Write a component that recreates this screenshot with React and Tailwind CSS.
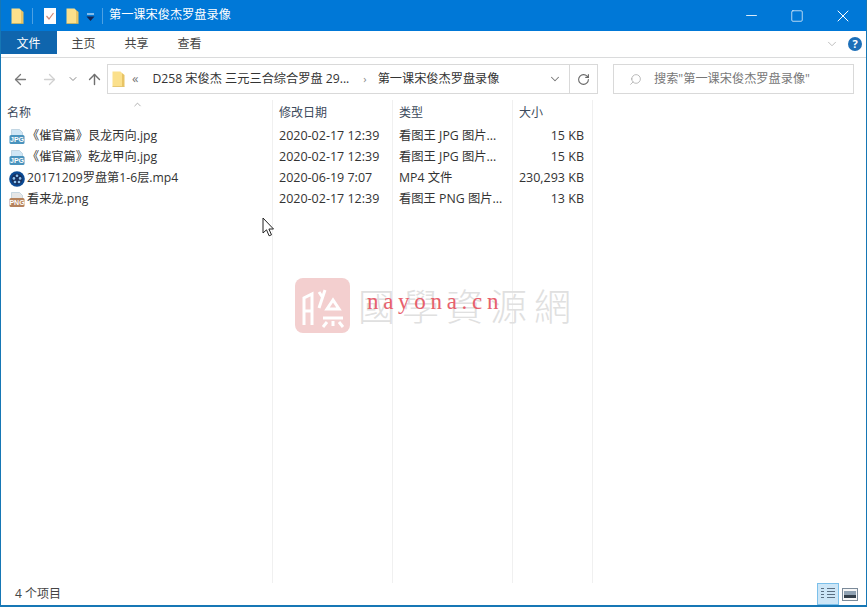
import { ArrowLeft, ArrowRight, ArrowUp, ChevronDown, ChevronUp, RotateCw, Search, Minus, Square, X } from 'lucide-react'

const font = { fontFamily: '"Open Sans", "Noto Sans CJK SC", sans-serif' }

const files = [
  { name: '《催官篇》艮龙丙向.jpg', date: '2020-02-17 12:39', type: '看图王 JPG 图片...', size: '15 KB', icon: 'jpg' },
  { name: '《催官篇》乾龙甲向.jpg', date: '2020-02-17 12:39', type: '看图王 JPG 图片...', size: '15 KB', icon: 'jpg' },
  { name: '20171209罗盘第1-6层.mp4', date: '2020-06-19 7:07', type: 'MP4 文件', size: '230,293 KB', icon: 'mp4' },
  { name: '看来龙.png', date: '2020-02-17 12:39', type: '看图王 PNG 图片...', size: '13 KB', icon: 'png' },
]

function Folder({ className }) {
  return (
    <svg viewBox="0 0 13 16" className={className}>
      <path d="M0.5 0.5h8l1.5 1.5v13.5h-9.5z" fill="#fbe08c" />
      <path d="M10 2l2.5 2v11.5h-2.5z" fill="#e8c465" />
      <path d="M0.5 15h12v0.7h-12z" fill="#dcb64f" />
    </svg>
  )
}

function FileIcon({ kind }) {
  if (kind === 'mp4') {
    return (
      <svg viewBox="0 0 16 16" className="w-4 h-4 shrink-0">
        <circle cx="8" cy="8" r="7.8" fill="#0b4a94" />
        <circle cx="8" cy="8" r="5.6" fill="#17305f" />
        <circle cx="8" cy="4.8" r="1.3" fill="#8fc3ee" />
        <circle cx="4.9" cy="7.4" r="1.3" fill="#8fc3ee" />
        <circle cx="11.1" cy="7.4" r="1.3" fill="#8fc3ee" />
        <circle cx="6" cy="11" r="1.3" fill="#8fc3ee" />
        <circle cx="10" cy="11" r="1.3" fill="#8fc3ee" />
      </svg>
    )
  }
  const band = kind === 'png' ? '#b5825c' : '#4a93bd'
  const page = kind === 'png' ? '#e6e6e6' : '#cfe6f5'
  return (
    <div className="relative w-4 h-4 shrink-0">
      <svg viewBox="0 0 16 16" className="w-4 h-4">
        <path d="M2.5 0.5h8l3 3v5h-11z" fill={page} stroke="#a9c2d4" strokeWidth="0.6" />
        <rect x="0.5" y="6" width="15" height="9" rx="1.5" fill={band} />
      </svg>
      <span className="absolute left-0 top-[6px] w-4 text-center text-[7px] leading-[9px] font-bold text-white" style={{ fontFamily: '"Liberation Sans", sans-serif' }}>
        {kind === 'png' ? 'PNG' : 'JPG'}
      </span>
    </div>
  )
}

function Column({ title, width, className, children }) {
  return (
    <div className={`${width} shrink-0 border-r border-[#f0f0f0] h-full`}>
      <div className={`h-[26px] pb-[1px] flex items-center text-[12px] text-[#3c4a5c] ${className}`}>{title}</div>
      {children}
    </div>
  )
}

function Cell({ className, children }) {
  return <div className={`h-[21px] flex items-center text-[#333] whitespace-nowrap ${className}`}>{children}</div>
}

export default function App() {
  return (
    <div className="w-[867px] h-[607px] flex flex-col bg-white border-x border-b-2 border-x-[#1677b5] border-b-[#1677b5] overflow-hidden text-[12px] relative" style={font}>
      {/* title bar */}
      <div className="h-[31px] -mx-px shrink-0 bg-[#0078d7] flex items-center text-white">
        <Folder className="w-[13px] h-4 ml-[11px]" />
        <div className="w-px h-4 bg-[#4da1e3] ml-2" />
        <svg viewBox="0 0 12 16" className="w-3 h-4 ml-[11px]">
          <path d="M0 0h12v16h-12z" fill="#fdfdfd" />
          <path d="M2.5 8l2.5 3 4.5-6" fill="none" stroke="#d08a78" strokeWidth="1.2" />
        </svg>
        <Folder className="w-[13px] h-4 ml-[10px]" />
        <svg viewBox="0 0 9 9" className="w-[9px] h-[9px] ml-[7px] mt-1">
          <path d="M1 1h7" stroke="#fff" strokeWidth="1" />
          <path d="M0.5 3.5h8l-4 4.5z" fill="#14224f" />
        </svg>
        <div className="w-px h-4 bg-[#4da1e3] ml-[7px]" />
        <span className="ml-[6px] text-[12.2px]">第一课宋俊杰罗盘录像</span>
        <div className="ml-auto flex items-center">
          <Minus className="w-[17px] h-[17px] mr-[30px]" strokeWidth={1.2} absoluteStrokeWidth />
          <Square className="w-[14px] h-[14px] mr-[29px]" strokeWidth={1.2} absoluteStrokeWidth />
          <X className="w-[20px] h-[20px] mr-[14px]" strokeWidth={1.2} absoluteStrokeWidth />
        </div>
      </div>

      {/* ribbon tabs */}
      <div className="h-[27px] shrink-0 -ml-px flex items-start border-b border-[#dadbdc] text-[#444]">
        <div className="w-[57px] h-[23px] pt-[2px] bg-[#0f65ad] text-white flex items-center justify-center">文件</div>
        <div className="w-[53px] h-[23px] pt-[2px] flex items-center justify-center">主页</div>
        <div className="w-[53px] h-[23px] pt-[2px] flex items-center justify-center">共享</div>
        <div className="w-[53px] h-[23px] pt-[2px] flex items-center justify-center">查看</div>
        <div className="ml-auto h-[26px] flex items-center">
          <ChevronDown className="w-[14px] h-[14px] text-[#b5b5b5] mr-[9px]" strokeWidth={1.5} />
          <div className="w-[14px] h-[14px] rounded-full bg-[#1d6fb8] text-white text-[11px] font-bold flex items-center justify-center mr-[4px]">?</div>
        </div>
      </div>

      {/* address row */}
      <div className="h-[42px] shrink-0 flex items-center">
        <ArrowLeft className="w-[17px] h-[17px] text-[#7a7a7a] ml-[11px]" strokeWidth={1.8} />
        <ArrowRight className="w-[17px] h-[17px] text-[#d0d0d0] ml-[12px]" strokeWidth={1.8} />
        <ChevronDown className="w-3 h-3 text-[#8a8a8a] ml-[9px]" strokeWidth={2} />
        <ArrowUp className="w-[17px] h-[17px] text-[#6f6f6f] ml-[7px]" strokeWidth={2} />
        <div className="w-[491px] h-[30px] ml-[4px] border border-[#d9d9d9] flex items-center text-[#333]">
          <Folder className="w-[13px] h-4 ml-[4px]" />
          <span className="ml-[7px] text-[#777] text-[13px]">«</span>
          <span className="ml-[14px] whitespace-nowrap text-[12.2px]">D258 宋俊杰 三元三合综合罗盘 29...</span>
          <span className="ml-[14px] text-[#888] text-[11px]">›</span>
          <span className="ml-[11px] whitespace-nowrap text-[12.2px]">第一课宋俊杰罗盘录像</span>
          <ChevronDown className="w-[14px] h-[14px] text-[#777] ml-auto shrink-0" strokeWidth={1.8} />
          <div className="w-px h-full bg-[#d9d9d9] ml-[7px] shrink-0" />
          <RotateCw className="w-[13px] h-[13px] text-[#666] mx-[7px] shrink-0" strokeWidth={2} />
        </div>
        <div className="w-[241px] h-[30px] ml-[15px] border border-[#d9d9d9] flex items-center text-[#777]">
          <Search className="w-[13px] h-[13px] text-[#999] ml-[15px] -scale-x-100" strokeWidth={1.2} />
          <span className="ml-[12px] whitespace-nowrap text-[12.2px]">搜索"第一课宋俊杰罗盘录像"</span>
        </div>
      </div>

      {/* file list */}
      <div className="flex-1 min-h-0 flex relative">
        <ChevronUp className="absolute left-[131px] -top-[1px] w-[11px] h-[11px] text-[#8f8f8f]" strokeWidth={1.5} />
        <Column title="名称" width="w-[272px]" className="pl-[6px]">
          {files.map((f) => (
            <Cell key={f.name} className="pl-[8px] gap-[2px] text-[12.2px]">
              <FileIcon kind={f.icon} />
              <span>{f.name}</span>
            </Cell>
          ))}
        </Column>
        <Column title="修改日期" width="w-[120px]" className="pl-[6px]">
          {files.map((f) => <Cell key={f.name} className="pl-[6px] text-[12.5px]">{f.date}</Cell>)}
        </Column>
        <Column title="类型" width="w-[120px]" className="pl-[6px]">
          {files.map((f) => <Cell key={f.name} className="pl-[6px] text-[12.3px]">{f.type}</Cell>)}
        </Column>
        <Column title="大小" width="w-[80px]" className="pl-[6px]">
          {files.map((f) => <Cell key={f.name} className="justify-end pr-[8px] text-[12.5px]">{f.size}</Cell>)}
        </Column>

        {/* watermark */}
        <div className="absolute left-[294px] top-[178px] flex items-center pointer-events-none">
          <svg viewBox="0 0 55 55" className="w-[55px] h-[55px]">
            <rect width="55" height="55" rx="8" fill="#f3cfcf" />
            <path d="M9 47V20l8-4v31M9 33h8M24 14l4 6M30 12l-6 18M38 22l-6 9h12zM28 40h20M32 44l-4 5M38 43v5M44 44l4 5" fill="none" stroke="#fff" strokeWidth="3" />
          </svg>
          <span className="ml-[8px] text-[37px] leading-none tracking-[7px] text-[#e0e0e0] whitespace-nowrap" style={{ fontFamily: '"Noto Sans CJK TC", sans-serif', fontWeight: 300 }}>國學資源網</span>
        </div>
        <span className="absolute left-[366px] top-[190px] text-[23px] leading-none tracking-[4.7px] text-[#e8606c] whitespace-nowrap pointer-events-none" style={{ fontFamily: '"Liberation Serif", serif' }}>nayona.cn</span>

        {/* mouse pointer */}
        <svg viewBox="0 0 13 21" className="absolute left-[261px] top-[117px] w-[13px] h-[21px]">
          <path d="M1 1v15l3.5-3.2 2.6 6 2.4-1-2.6-5.8h4.6z" fill="#fff" stroke="#222" strokeWidth="1" />
        </svg>
      </div>

      {/* status bar */}
      <div className="h-[22px] shrink-0 flex items-center text-[#444]">
        <span className="ml-[14px]">4 个项目</span>
        <div className="ml-auto flex items-center mr-[5px]">
          <div className="w-[22px] h-[22px] bg-[#cde6f7] border border-[#7cc0ea] flex items-center justify-center">
            <svg viewBox="0 0 16 14" className="w-4 h-[14px]">
              <path d="M1 1.5h3M1 4.5h3M1 7.5h3M1 10.5h3M7 1.5h8M7 4.5h8M7 7.5h8M7 10.5h8" stroke="#5b6f82" strokeWidth="1" />
            </svg>
          </div>
          <div className="w-[22px] h-[22px] flex items-center justify-center">
            <svg viewBox="0 0 16 13" className="w-4 h-[13px]">
              <rect x="0.5" y="0.5" width="15" height="12" fill="#f7f7f7" stroke="#7b8a99" />
              <rect x="2" y="3" width="12" height="4" fill="#8fa1b2" />
              <rect x="2" y="7" width="12" height="3" fill="#333e4a" />
            </svg>
          </div>
        </div>
      </div>
    </div>
  )
}
